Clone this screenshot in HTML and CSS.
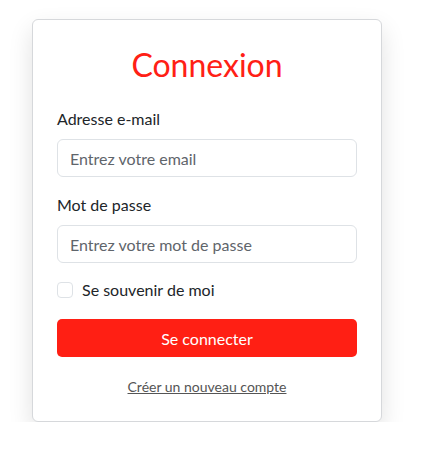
FILE: index.html
```html
<!DOCTYPE html>
<html lang="fr">
<head>
<meta charset="utf-8">
<title>Connexion</title>
<link rel="stylesheet" href="styles.css">
</head>
<body>
<div class="card">
  <h1 class="title">Connexion</h1>
  <form class="form">
    <div class="group">
      <label class="label" for="email">Adresse e-mail</label>
      <input class="input" id="email" type="email" placeholder="Entrez votre email">
    </div>
    <div class="group">
      <label class="label" for="pwd">Mot de passe</label>
      <input class="input" id="pwd" type="password" placeholder="Entrez votre mot de passe">
    </div>
    <label class="check-row">
      <span class="check"></span>
      <span>Se souvenir de moi</span>
    </label>
    <button class="btn" type="button">Se connecter</button>
    <div class="link-row"><a class="link" href="#">Créer un nouveau compte</a></div>
  </form>
</div>
</body>
</html>
```
FILE: styles.css
```css
html, body {
  margin: 0;
  background: #fff;
}
body {
  padding: 19px 0 0 32px;
  font-family: Lato, "Open Sans", sans-serif;
  color: #212529;
}
.card {
  box-sizing: border-box;
  width: 350px;
  border: 1px solid #d6d8db;
  border-radius: 6px;
  background: #fff;
  box-shadow: 0 10px 24px rgba(0, 0, 0, 0.12);
  padding: 26px 24px 24px;
}
.title {
  margin: 0 0 23px;
  text-align: center;
  font-weight: 400;
  font-size: 32px;
  line-height: 38px;
  color: #ff2015;
}
.form {
  display: flex;
  flex-direction: column;
}
.group {
  display: flex;
  flex-direction: column;
  margin-bottom: 16px;
}
.label {
  font-size: 16px;
  line-height: 24px;
  margin-bottom: 8px;
}
.input {
  box-sizing: border-box;
  height: 38px;
  border: 1px solid #dee2e6;
  border-radius: 6px;
  padding: 0 12px;
  font-family: inherit;
  font-size: 16px;
  color: #212529;
  outline: none;
}
.input::placeholder {
  color: #5f656b;
}
.check-row {
  display: flex;
  align-items: center;
  gap: 9px;
  font-size: 16px;
  line-height: 24px;
  margin-top: -1px;
  margin-bottom: 17px;
}
.check {
  box-sizing: border-box;
  width: 16px;
  height: 16px;
  border: 1px solid #dee2e6;
  border-radius: 4px;
}
.btn {
  height: 38px;
  border: none;
  border-radius: 5px;
  background: #ff1f14;
  color: #fff;
  font-family: inherit;
  font-size: 16px;
}
.link-row {
  text-align: center;
  margin-top: 19px;
  line-height: 20px;
}
.link {
  color: #555;
  font-size: 14px;
  text-decoration: underline;
}
```
